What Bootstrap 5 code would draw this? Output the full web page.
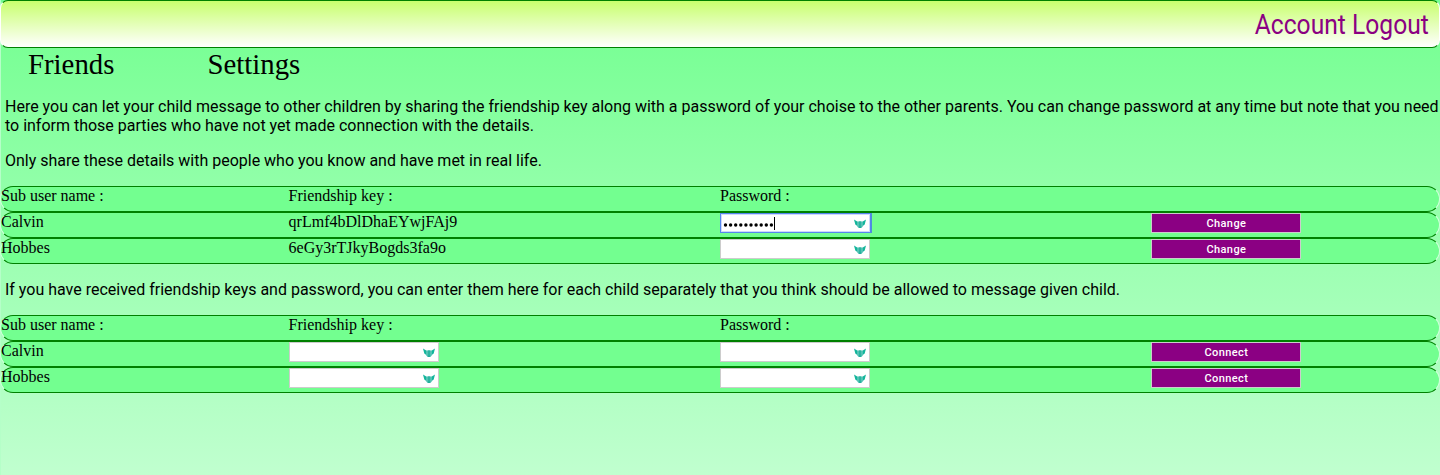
<!DOCTYPE html>
<html lang="en">
<head>
<meta charset="utf-8">
<meta name="viewport" content="width=device-width, initial-scale=1">
<title>Friends</title>
<link href="https://cdn.jsdelivr.net/npm/bootstrap@5.3.0/dist/css/bootstrap.min.css" rel="stylesheet">
<style>
html { height: 100%; }
body { height: 475px; overflow: hidden; color: #000; background: linear-gradient(#73ff90, #c0ffcf); font-family: "Liberation Serif", serif; font-size: 16px; line-height: 18px; }
.page { height: 475px; border-left: 1px solid #b5ffc8; }
.topbar { height: 48px; margin-left: -1px; border: 1px solid green; border-left-color: #fff; border-right-color: #fff; border-radius: 8px; background: linear-gradient(#c8ff6e, #fff); padding-right: 10px; }
.account { color: #8b0083; font: 400 28px/48px Roboto, sans-serif; white-space: nowrap; transform: scaleX(.88); transform-origin: right center; }
.tabs { height: 36px; font-size: 28.8px; line-height: 33px; padding-left: 27px; }
.tabs a { color: #000; text-decoration: none; width: 179.5px; }
.copy { font-family: Roboto, sans-serif; line-height: 19px; padding-left: 4px; white-space: nowrap; letter-spacing: -.006px; }
.line { height: 26px; margin-left: -1px; border: 1px solid green; border-left-color: #d4ffde; border-right-color: #d4ffde; border-radius: 13px; background: #73ff90; }
.line > * { flex: none; }
.c20 { width: 20%; }
.c30 { width: 30%; }
.entry { width: 150px; height: 20px; border: 1px solid #ccc; border-radius: 0; background: #fff; padding: 0 3px 0 2px; }
.entry.active { width: 151px; border: 1px solid #5585ee; box-shadow: inset 0 0 0 1px #cdd9fb, 1px 0 0 #4d8fd8; padding-right: 4px; }
.entry svg.ms-auto { margin-top: 2px; }
.caret { width: 1px; height: 13px; background: #000; }
.action { width: 150px; height: 20px; border: 1px solid #ccc; border-radius: 0; background: #8b0083; color: #fff; font: 500 11px/16px Roboto, sans-serif; letter-spacing: .4px; padding: 1px 0 0; display: block; }
.action:hover { background: #8b0083; color: #fff; }
</style>
</head>
<body>
<svg width="0" height="0" class="position-absolute">
  <symbol id="wings" viewBox="0 0 12 10">
    <path d="M0 .6 3.6 2.8V7.2L1.3 5.4Z M12 .6 8.4 2.8V7.2L10.7 5.4Z" fill="#12b59b"/>
    <path d="M3.4 2.6H8.6V7.8L7.2 9H4.8L3.4 7.8Z" fill="#3cb9aa"/>
    <path d="M6 2.2V9" stroke="#0fa893" stroke-width="1.2"/>
    <path d="M4.8 2.8V7.6M7.2 2.8V7.6" stroke="#8fdcd0" stroke-width=".4"/>
  </symbol>
</svg>
<div class="page">
  <header class="topbar d-flex justify-content-end"><div class="account">Account Logout</div></header>
  <nav class="tabs d-flex"><a href="#">Friends</a><a href="#">Settings</a></nav>

  <p class="copy mb-3" style="margin-top:13px">Here you can let your child message to other children by sharing the friendship key along with a password of your choise to the other parents. You can change password at any time but note that you need<br>to inform those parties who have not yet made connection with the details.</p>
  <p class="copy mb-3">Only share these details with people who you know and have met in real life.</p>

  <section>
    <div class="line d-flex"><div class="c20">Sub user name :</div><div class="c30">Friendship key :</div><div class="c30">Password :</div></div>
    <div class="line d-flex"><div class="c20">Calvin</div><div class="c30">qrLmf4bDlDhaEYwjFAj9</div>
      <div class="c30"><div class="entry active d-flex align-items-center"><svg width="51" height="16"><g fill="#000"><circle cx="2.5" cy="10" r="1.7"/><circle cx="7.6" cy="10" r="1.7"/><circle cx="12.7" cy="10" r="1.7"/><circle cx="17.8" cy="10" r="1.7"/><circle cx="22.9" cy="10" r="1.7"/><circle cx="28" cy="10" r="1.7"/><circle cx="33.1" cy="10" r="1.7"/><circle cx="38.2" cy="10" r="1.7"/><circle cx="43.3" cy="10" r="1.7"/><circle cx="48.4" cy="10" r="1.7"/></g></svg><span class="caret"></span><svg class="ms-auto" width="12" height="10"><use href="#wings"/></svg></div></div>
      <div class="c20"><button class="btn action">Change</button></div></div>
    <div class="line d-flex"><div class="c20">Hobbes</div><div class="c30">6eGy3rTJkyBogds3fa9o</div>
      <div class="c30"><div class="entry d-flex align-items-center"><svg class="ms-auto" width="12" height="10"><use href="#wings"/></svg></div></div>
      <div class="c20"><button class="btn action">Change</button></div></div>
  </section>

  <p class="copy my-3">If you have received friendship keys and password, you can enter them here for each child separately that you think should be allowed to message given child.</p>

  <section>
    <div class="line d-flex"><div class="c20">Sub user name :</div><div class="c30">Friendship key :</div><div class="c30">Password :</div></div>
    <div class="line d-flex"><div class="c20">Calvin</div>
      <div class="c30"><div class="entry d-flex align-items-center"><svg class="ms-auto" width="12" height="10"><use href="#wings"/></svg></div></div>
      <div class="c30"><div class="entry d-flex align-items-center"><svg class="ms-auto" width="12" height="10"><use href="#wings"/></svg></div></div>
      <div class="c20"><button class="btn action">Connect</button></div></div>
    <div class="line d-flex"><div class="c20">Hobbes</div>
      <div class="c30"><div class="entry d-flex align-items-center"><svg class="ms-auto" width="12" height="10"><use href="#wings"/></svg></div></div>
      <div class="c30"><div class="entry d-flex align-items-center"><svg class="ms-auto" width="12" height="10"><use href="#wings"/></svg></div></div>
      <div class="c20"><button class="btn action">Connect</button></div></div>
  </section>
</div>
<script src="https://cdn.jsdelivr.net/npm/bootstrap@5.3.0/dist/js/bootstrap.bundle.min.js"></script>
</body>
</html>
